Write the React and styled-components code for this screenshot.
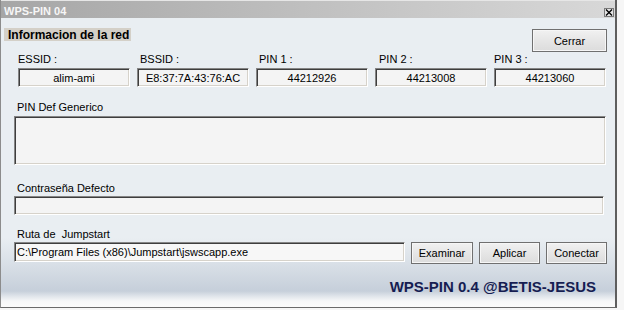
import React from 'react'
import styled, { createGlobalStyle } from 'styled-components'

const GlobalStyle = createGlobalStyle`
  html, body {
    margin: 0;
    padding: 0;
    background: #f6f6f6;
  }
  body {
    font-family: "Liberation Sans", Arial, sans-serif;
    font-size: 11px;
    color: #000;
  }
`

const fields = [
  { label: 'ESSID :', value: 'alim-ami', indent: 0 },
  { label: 'BSSID :', value: 'E8:37:7A:43:76:AC', indent: 3 },
  { label: 'PIN 1 :', value: '44212926', indent: 3 },
  { label: 'PIN 2 :', value: '44213008', indent: 4 },
  { label: 'PIN 3 :', value: '44213060', indent: 0 },
]

const App = () => {
  return (
    <>
      <GlobalStyle />
      <Window>
        <TitleBar>
          <Title>WPS-PIN 04</Title>
          <CloseBox>
            <svg width="8" height="7" viewBox="0 0 8 7">
              <path d="M1 0.5 L7 6.5 M7 0.5 L1 6.5" stroke="#000" strokeWidth="1.3" fill="none" />
            </svg>
          </CloseBox>
        </TitleBar>
        <Body>
          <HeaderRow>
            <GroupLabel>Informacion de la red</GroupLabel>
            <Button $w={75} $h={23}>Cerrar</Button>
          </HeaderRow>
          <FieldGrid>
            {fields.map((f) => (
              <Field key={f.label}>
                <Label $indent={f.indent}>{f.label}</Label>
                <ValueBox>{f.value}</ValueBox>
              </Field>
            ))}
          </FieldGrid>
          <Section $top={14}>
            <Label>PIN Def Generico</Label>
            <Sunken $h={49} $gap={2} />
          </Section>
          <Section $top={17}>
            <Label>Contraseña Defecto</Label>
            <Sunken $h={19} $gap={1} $right={2} />
          </Section>
          <Section $top={13}>
            <Label>Ruta de  Jumpstart</Label>
            <PathRow>
              <PathInput>C:\Program Files (x86)\Jumpstart\jswscapp.exe</PathInput>
              <Button $w={62} $h={22}>Examinar</Button>
              <Button $w={61} $h={22}>Aplicar</Button>
              <Button $w={61} $h={22}>Conectar</Button>
            </PathRow>
          </Section>
          <Footer>WPS-PIN 0.4 @BETIS-JESUS</Footer>
        </Body>
      </Window>
    </>
  )
}

export default App

const Window = styled.div`
  width: 617px;
  height: 308px;
  box-sizing: border-box;
  display: flex;
  flex-direction: column;
  border-left: 1px solid #8c8c8c;
  border-right: 2px solid #5e5e5e;
  border-bottom: 1px solid #6a6a6a;
  background: linear-gradient(
    to bottom,
    #e9eef2 0px,
    #e9eef2 238px,
    #d6dde5 268px,
    #c6cfda 291px,
    #dfe4ea 296px,
    #f6f7f8 301px,
    #fbfbfb 307px
  );
`

const TitleBar = styled.div`
  height: 18px;
  box-sizing: border-box;
  padding: 4px 1px 0 3px;
  display: flex;
  align-items: center;
  justify-content: space-between;
  border-top: 1px solid #e6e6e6;
  background: linear-gradient(to right, #a6a6a6, #c2c2c2 55%, #d8d8d8);
`

const Title = styled.div`
  font-weight: bold;
  font-size: 11px;
  line-height: 13px;
  color: #f6f6f6;
`

const CloseBox = styled.div`
  width: 10px;
  height: 9px;
  box-sizing: border-box;
  border: 1px solid #7a7a7a;
  background: #e4e4e4;
  display: flex;
  align-items: center;
  justify-content: center;
  margin-top: 1px;
`

const Body = styled.div`
  flex: 1;
  display: flex;
  flex-direction: column;
  padding: 10px 9px 0 13px;
`

const HeaderRow = styled.div`
  display: flex;
  justify-content: space-between;
  align-items: flex-start;
  height: 24px;
  margin: 0 -1px 0 -10px;
`

const GroupLabel = styled.div`
  background: #d4d0c8;
  font-weight: bold;
  font-size: 12px;
  height: 13px;
  line-height: 14px;
  padding: 0 3px 0 4px;
  width: 120px;
  white-space: nowrap;
`

const Button = styled.div`
  width: ${(p) => p.$w}px;
  height: ${(p) => p.$h}px;
  box-sizing: border-box;
  border: 1px solid #707070;
  box-shadow: inset 0 0 0 1px #f6f6f6;
  background: linear-gradient(to bottom, #f1f1f1, #e6e6e6 50%, #dcdcdc);
  display: flex;
  align-items: center;
  justify-content: center;
  font-size: 11px;
  margin-top: 1px;
`

const FieldGrid = styled.div`
  display: grid;
  grid-template-columns: repeat(5, 112px);
  column-gap: 7px;
  margin: 1px 0 0 4px;
`

const Field = styled.div`
  display: flex;
  flex-direction: column;
  gap: 2px;
`

const Label = styled.div`
  font-size: 11px;
  line-height: 13px;
  padding-left: ${(p) => (p.$indent ?? 3)}px;
  white-space: pre;
`

const sunkenBorder = `
  box-sizing: border-box;
  background: #f4f4f4;
  border: 1px solid;
  border-color: #858585 #ffffff #ffffff #858585;
  box-shadow: inset 1px 1px 0 #3e3e3e, inset -1px -1px 0 #d6d2ca;
`

const ValueBox = styled.div`
  ${sunkenBorder}
  height: 19px;
  display: flex;
  align-items: center;
  justify-content: center;
  font-size: 11px;
`

const Section = styled.div`
  display: flex;
  flex-direction: column;
  margin-top: ${(p) => p.$top}px;
`

const Sunken = styled.div`
  ${sunkenBorder}
  height: ${(p) => p.$h}px;
  margin-top: ${(p) => p.$gap}px;
  margin-right: ${(p) => p.$right || 0}px;
`

const PathRow = styled.div`
  display: flex;
  align-items: flex-start;
  gap: 6px;
  margin-right: -1px;
`

const PathInput = styled.div`
  ${sunkenBorder}
  width: 391px;
  height: 20px;
  margin-top: 1px;
  display: flex;
  align-items: center;
  padding-left: 2px;
  font-size: 11px;
  white-space: nowrap;
  background: #f7f7f7;
`

const Footer = styled.div`
  align-self: flex-end;
  margin: 14px 10px 0 0;
  font-weight: bold;
  font-size: 15px;
  line-height: 17px;
  color: #161d52;
`
